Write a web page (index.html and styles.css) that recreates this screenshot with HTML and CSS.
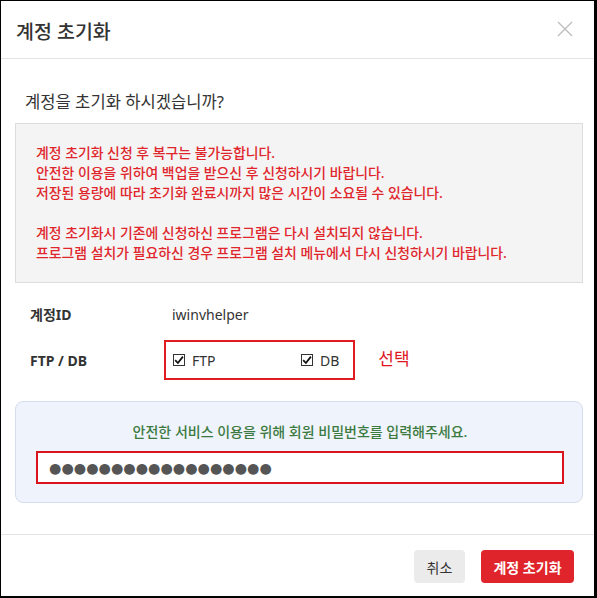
FILE: index.html
```html
<!DOCTYPE html>
<html lang="ko">
<head>
    <meta charset="UTF-8">
    <meta name="viewport" content="width=device-width, initial-scale=1.0">
    <title>계정 초기화</title>
    <link rel="stylesheet" href="styles.css">
</head>
<body>
    <!-- 계정 초기화 모달 -->
    <div class="modal">
        <div class="modal-header">
            <h2 class="modal-title">계정 초기화</h2>
            <button class="close-btn" type="button" aria-label="닫기">
                <svg width="16" height="16" viewBox="0 0 16 16">
                    <path d="M1 1 L15 15 M15 1 L1 15" stroke="#bdbdbd" stroke-width="1.4" fill="none"/>
                </svg>
            </button>
        </div>

        <div class="modal-body">
            <p class="question">계정을 초기화 하시겠습니까?</p>

            <div class="notice">
                <p>계정 초기화 신청 후 복구는 불가능합니다.</p>
                <p>안전한 이용을 위하여 백업을 받으신 후 신청하시기 바랍니다.</p>
                <p>저장된 용량에 따라 초기화 완료시까지 많은 시간이 소요될 수 있습니다.</p>
                <p class="notice-gap">계정 초기화시 기존에 신청하신 프로그램은 다시 설치되지 않습니다.</p>
                <p>프로그램 설치가 필요하신 경우 프로그램 설치 메뉴에서 다시 신청하시기 바랍니다.</p>
            </div>

            <div class="info">
                <div class="info-row">
                    <span class="info-label">계정ID</span>
                    <span class="info-value">iwinvhelper</span>
                </div>
                <div class="info-row info-row-check">
                    <span class="info-label">FTP / DB</span>
                    <div class="check-group">
                        <label class="check-item check-item-first">
                            <span class="check-box">
                                <svg width="10" height="10" viewBox="0 0 10 10">
                                    <path d="M1.2 5.2 L3.9 8 L8.9 1.6" stroke="#111" stroke-width="1.8" fill="none"/>
                                </svg>
                            </span>
                            FTP
                        </label>
                        <label class="check-item">
                            <span class="check-box">
                                <svg width="10" height="10" viewBox="0 0 10 10">
                                    <path d="M1.2 5.2 L3.9 8 L8.9 1.6" stroke="#111" stroke-width="1.8" fill="none"/>
                                </svg>
                            </span>
                            DB
                        </label>
                    </div>
                    <span class="check-note">선택</span>
                </div>
            </div>

            <div class="password-box">
                <p class="password-text">안전한 서비스 이용을 위해 회원 비밀번호를 입력해주세요.</p>
                <input class="password-input" type="text" value="●●●●●●●●●●●●●●●●●●">
            </div>
        </div>

        <div class="modal-footer">
            <button class="btn btn-cancel" type="button">취소</button>
            <button class="btn btn-reset" type="button">계정 초기화</button>
        </div>
    </div>
</body>
</html>
```

FILE: styles.css
```css
* {
    margin: 0;
    padding: 0;
    box-sizing: border-box;
    font-family: 'Noto Sans', 'Noto Sans CJK KR', sans-serif;
}

html, body {
    width: 100%;
    height: 100%;
    background: #fff;
    overflow: hidden;
}

/* 모달 */
.modal {
    width: 597px;
    height: 598px;
    border-style: solid;
    border-color: #000;
    border-width: 1px 3px 2px 1px;
    background: #fff;
    color: #333;
    display: flex;
    flex-direction: column;
}

.modal-header {
    height: 58px;
    padding: 2px 15px 0 15px;
    display: flex;
    align-items: center;
    justify-content: space-between;
    border-bottom: 1px solid #e4e4e4;
}

.modal-title {
    font-size: 19.5px;
    font-weight: 500;
    color: #333;
}

.close-btn {
    background: none;
    border: none;
    width: 16px;
    height: 16px;
    margin-right: 6px;
    margin-top: -3px;
    cursor: pointer;
    display: flex;
}

/* 본문 */
.modal-body {
    flex: 1;
    padding: 33px 11px 0 14px;
    border-bottom: 1px solid #e4e4e4;
}

.question {
    font-size: 16.6px;
    line-height: 20px;
    padding-left: 10px;
    color: #333;
}

.notice {
    margin-top: 11px;
    background: #f4f4f4;
    border: 1px solid #ddd;
    padding: 19px 20px 19px 20px;
}

.notice p {
    font-size: 13.9px;
    line-height: 20px;
    color: #e0262c;
    font-weight: 500;
}

.notice .notice-gap {
    margin-top: 20px;
}

/* 계정 정보 */
.info {
    padding: 0 15px;
    margin-top: 16px;
}

.info-row {
    display: flex;
    align-items: center;
    height: 30px;
}

.info-row-check {
    height: 40px;
    margin-top: 11px;
}

.info-label {
    width: 134px;
    font-size: 14px;
    font-weight: bold;
    color: #333;
}

.info-value {
    padding-left: 8px;
    font-size: 14px;
    color: #333;
}

.check-group {
    height: 40px;
    border: 2px solid #e01b22;
    padding: 0 14px 0 7px;
    display: flex;
    align-items: center;
}

.check-item {
    display: flex;
    align-items: center;
    gap: 7px;
    font-size: 14px;
    color: #333;
}

.check-item-first {
    width: 128px;
}

.check-box {
    width: 12px;
    height: 12px;
    border: 1px solid #333;
    background: #fff;
    display: flex;
    align-items: center;
    justify-content: center;
}

.check-note {
    margin-left: 23px;
    margin-top: -6px;
    font-size: 17px;
    color: #e0161e;
}

/* 비밀번호 입력 */
.password-box {
    margin-top: 21px;
    background: #eef3fc;
    border: 1px solid #d6deee;
    border-radius: 8px;
    padding: 20px 18px 18px 20px;
}

.password-text {
    text-align: center;
    font-size: 14px;
    line-height: 20px;
    color: #3c7a3f;
    font-weight: 500;
}

.password-input {
    display: block;
    width: 100%;
    height: 33px;
    margin-top: 9px;
    border: 2px solid #d9141c;
    background: #fff;
    padding: 0 11px;
    font-family: 'DejaVu Sans', sans-serif;
    font-size: 14.2px;
    color: #555;
    outline: none;
}

/* 하단 버튼 */
.modal-footer {
    height: 61px;
    padding: 15px 20px 13px 0;
    display: flex;
    justify-content: flex-end;
    align-items: flex-start;
    gap: 16px;
}

.btn {
    height: 33px;
    border: none;
    border-radius: 4px;
    font-size: 14px;
    cursor: pointer;
}

.btn-cancel {
    width: 51px;
    background: #ebebeb;
    color: #333;
}

.btn-reset {
    width: 93px;
    background: #e0242b;
    color: #fff;
    font-weight: bold;
}
```
